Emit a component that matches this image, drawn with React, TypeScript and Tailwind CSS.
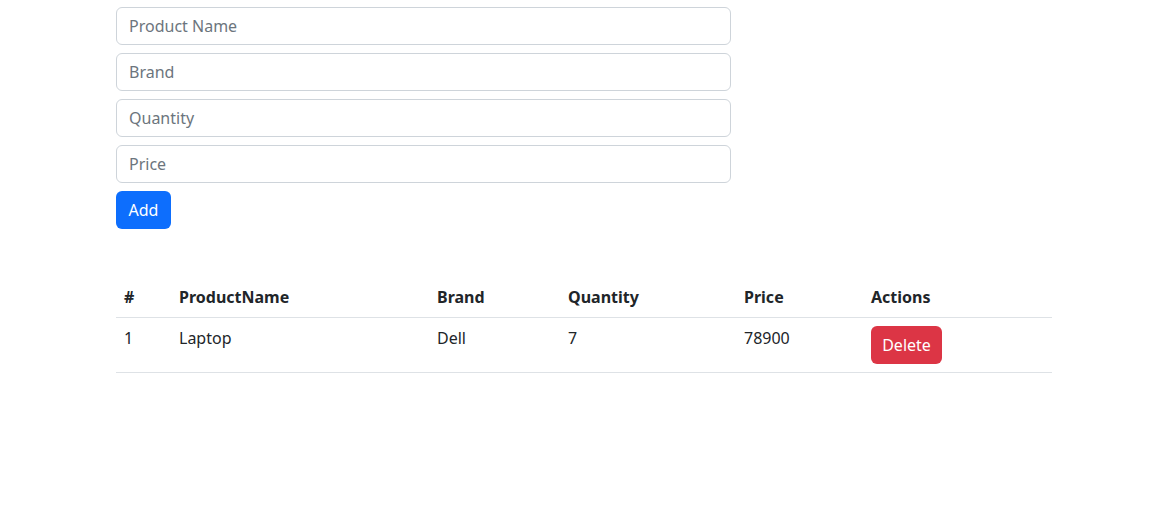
import { useState } from 'react'

interface Product {
  name: string
  brand: string
  quantity: string
  price: string
}

const inputClass =
  'block w-full h-[38px] px-3 rounded-[6px] border border-[#ced4da] bg-white text-base text-[#212529] placeholder:text-[#6c757d] focus:outline-none'

export default function App() {
  const [products, setProducts] = useState<Product[]>([
    { name: 'Laptop', brand: 'Dell', quantity: '7', price: '78900' },
  ])
  const [form, setForm] = useState<Product>({ name: '', brand: '', quantity: '', price: '' })

  function handleAdd() {
    if (!form.name) return
    setProducts([...products, form])
    setForm({ name: '', brand: '', quantity: '', price: '' })
  }

  return (
    <div
      className="min-h-screen bg-white text-[#212529] text-base leading-6"
      style={{ fontFamily: '"Noto Sans", "Open Sans", sans-serif' }}
    >
      <div className="w-[936px] ml-[116px] pt-[7px]">
        {/* Formulario */}
        <div className="w-[615px] flex flex-col gap-2">
          <input
            className={inputClass}
            placeholder="Product Name"
            value={form.name}
            onChange={(e) => setForm({ ...form, name: e.target.value })}
          />
          <input
            className={inputClass}
            placeholder="Brand"
            value={form.brand}
            onChange={(e) => setForm({ ...form, brand: e.target.value })}
          />
          <input
            className={inputClass}
            placeholder="Quantity"
            value={form.quantity}
            onChange={(e) => setForm({ ...form, quantity: e.target.value })}
          />
          <input
            className={inputClass}
            placeholder="Price"
            value={form.price}
            onChange={(e) => setForm({ ...form, price: e.target.value })}
          />
          <div>
            <button
              onClick={handleAdd}
              className="w-[55px] h-[38px] rounded-[6px] bg-[#0d6efd] text-white text-base"
            >
              Add
            </button>
          </div>
        </div>

        {/* Tabela */}
        <table className="w-full mt-12 border-collapse table-fixed">
          <colgroup>
            <col className="w-[55px]" />
            <col className="w-[258px]" />
            <col className="w-[131px]" />
            <col className="w-[176px]" />
            <col className="w-[127px]" />
            <col />
          </colgroup>
          <thead>
            <tr className="border-b border-[#dee2e6] text-left">
              <th className="p-2 font-bold">#</th>
              <th className="p-2 font-bold">ProductName</th>
              <th className="p-2 font-bold">Brand</th>
              <th className="p-2 font-bold">Quantity</th>
              <th className="p-2 font-bold">Price</th>
              <th className="p-2 font-bold">Actions</th>
            </tr>
          </thead>
          <tbody>
            {products.map((p, idx) => (
              <tr key={idx} className="border-b border-[#dee2e6] align-top">
                <td className="p-2">{idx + 1}</td>
                <td className="p-2">{p.name}</td>
                <td className="p-2">{p.brand}</td>
                <td className="p-2">{p.quantity}</td>
                <td className="p-2">{p.price}</td>
                <td className="p-2">
                  <button
                    onClick={() => setProducts(products.filter((_, i) => i !== idx))}
                    className="w-[71px] h-[38px] rounded-[6px] bg-[#dc3545] text-white text-base"
                  >
                    Delete
                  </button>
                </td>
              </tr>
            ))}
          </tbody>
        </table>
      </div>
    </div>
  )
}
